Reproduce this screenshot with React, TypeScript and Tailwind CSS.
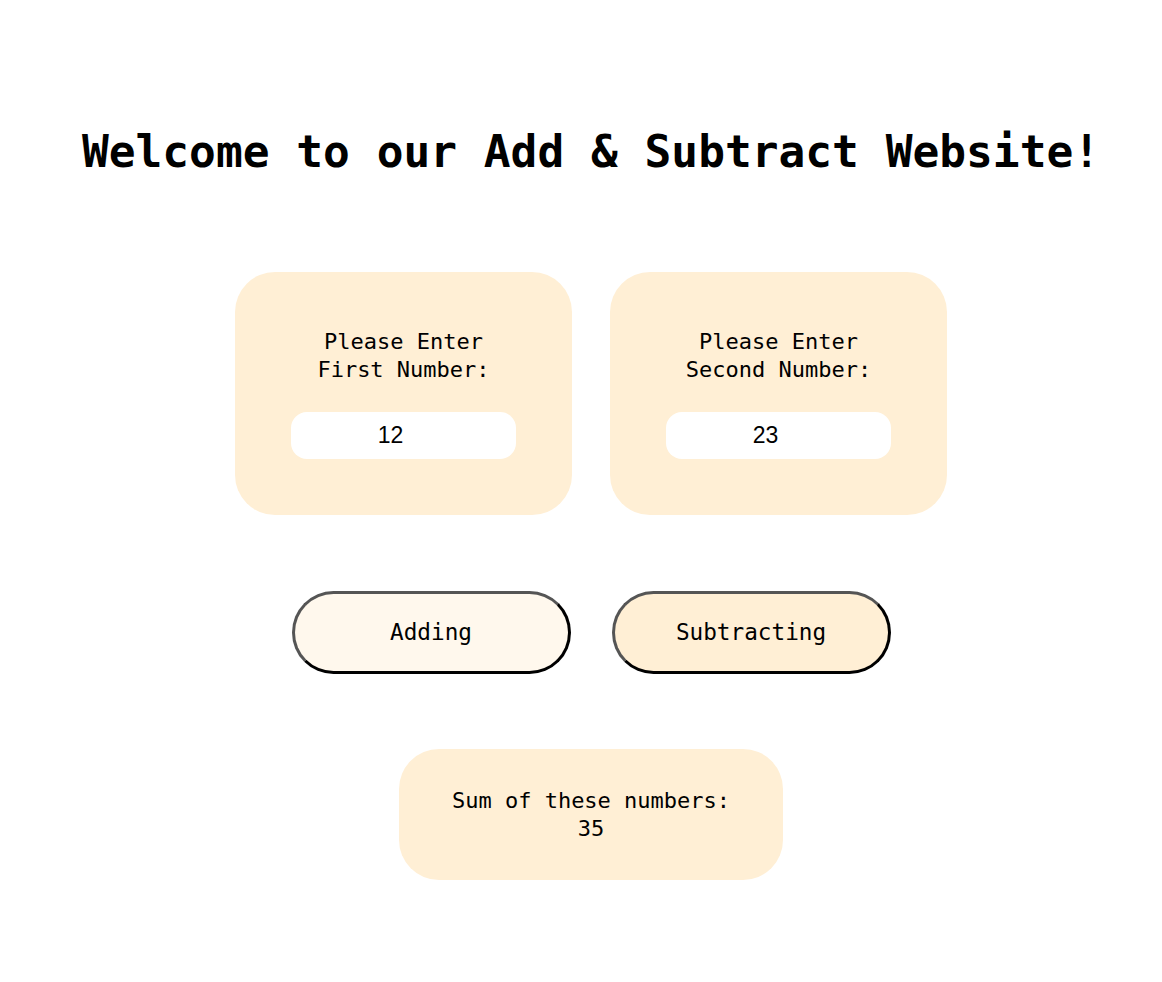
import { useState } from "react";

const mono = "font-['DejaVu_Sans_Mono','Liberation_Mono',monospace]";

function NumberCard({
  label,
  value,
  onChange,
}: {
  label: string;
  value: string;
  onChange: (v: string) => void;
}) {
  return (
    <div className="flex w-[337px] flex-col items-center rounded-[40px] bg-[#ffefd5] pt-[56px] pb-[56px]">
      <p className={`${mono} text-center text-[22px] leading-[28px] text-black`}>
        Please Enter
        <br />
        {label} Number:
      </p>
      <input
        type="text"
        value={value}
        onChange={(e) => onChange(e.target.value)}
        className="mt-[28px] h-[47px] w-[225px] rounded-[16px] bg-white pr-[26px] text-center font-['Liberation_Sans',Arial,sans-serif] text-[23px] text-black outline-none"
      />
    </div>
  );
}

export default function App() {
  const [first, setFirst] = useState("12");
  const [second, setSecond] = useState("23");
  const [mode, setMode] = useState<"add" | "sub">("add");

  const a = Number(first) || 0;
  const b = Number(second) || 0;
  const result = mode === "add" ? a + b : a - b;

  return (
    <div className="flex min-h-[982px] w-full flex-col items-center bg-white pl-[20px]">
      {/* Title */}
      <h1
        className={`${mono} mt-[126px] text-[44.5px] leading-[52px] font-bold whitespace-nowrap text-black`}
      >
        Welcome to our Add &amp; Subtract Website!
      </h1>

      {/* Inputs */}
      <div className="mt-[94px] flex gap-[38px]">
        <NumberCard label="First" value={first} onChange={setFirst} />
        <NumberCard label="Second" value={second} onChange={setSecond} />
      </div>

      {/* Operation buttons */}
      <div className="mt-[76px] flex gap-[41px]">
        <button
          onClick={() => setMode("add")}
          className={`${mono} h-[83px] w-[279px] rounded-full border-[3px] border-t-[#555] border-r-black border-b-black border-l-[#555] bg-[#fff8ed] text-[22.7px] text-black`}
        >
          Adding
        </button>
        <button
          onClick={() => setMode("sub")}
          className={`${mono} h-[83px] w-[279px] rounded-full border-[3px] border-t-[#555] border-r-black border-b-black border-l-[#555] bg-[#ffefd5] text-[22.7px] text-black`}
        >
          Subtracting
        </button>
      </div>

      {/* Result */}
      <div className="mt-[75px] flex w-[384px] flex-col items-center rounded-[40px] bg-[#ffefd5] pt-[38px] pb-[37px]">
        <p className={`${mono} text-center text-[22px] leading-[28px] text-black`}>
          {mode === "add" ? "Sum" : "Difference"} of these numbers:
          <br />
          {result}
        </p>
      </div>
    </div>
  );
}
